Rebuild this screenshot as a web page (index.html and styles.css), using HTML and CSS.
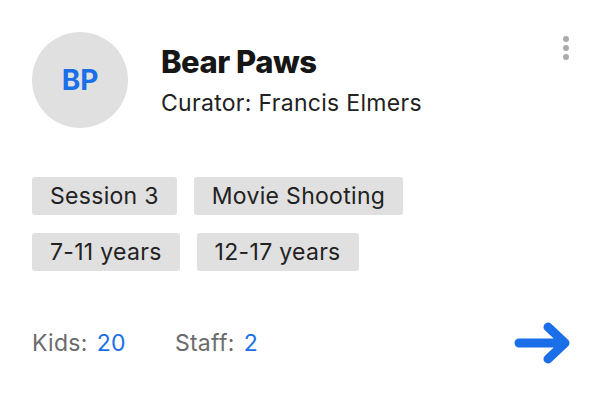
FILE: index.html
```html
<!DOCTYPE html>
<html>
<head>
<meta charset="utf-8">
<link rel="stylesheet" href="styles.css">
</head>
<body>
<div class="card">
  <div class="header">
    <div class="avatar">BP</div>
    <div class="info">
      <div class="title">Bear Paws</div>
      <div class="curator">Curator: Francis Elmers</div>
    </div>
    <div class="kebab"><span></span><span></span><span></span></div>
  </div>
  <div class="tags">
    <div class="row">
      <span class="tag">Session 3</span>
      <span class="tag">Movie Shooting</span>
    </div>
    <div class="row">
      <span class="tag">7-11 years</span>
      <span class="tag">12-17 years</span>
    </div>
  </div>
  <div class="footer">
    <div class="stats">
      <span class="stat"><span class="label">Kids:</span><span class="val">20</span></span>
      <span class="stat"><span class="label">Staff:</span><span class="val">2</span></span>
    </div>
    <svg class="arrow" width="58" height="42" viewBox="0 0 58 42">
      <path d="M6 21 H52 M35 5 L52 21 L35 37" fill="none" stroke="#1a6fe8" stroke-width="9" stroke-linecap="round" stroke-linejoin="round"/>
    </svg>
  </div>
</div>
</body>
</html>
```
FILE: styles.css
```css
html, body {
  margin: 0;
  padding: 0;
  background: #ffffff;
}
body {
  font-family: Inter, "Noto Sans", sans-serif;
  color: #1d1d1f;
}
.card {
  width: 614px;
  height: 416px;
  box-sizing: border-box;
  padding: 32px 42px 0 32px;
}
.header {
  display: flex;
  align-items: center;
}
.avatar {
  width: 96px;
  height: 96px;
  border-radius: 50%;
  background: #e0e0e0;
  color: #1a6fe8;
  font-weight: 700;
  font-size: 28px;
  display: flex;
  align-items: center;
  justify-content: center;
  flex-shrink: 0;
}
.info {
  margin-left: 33px;
  flex: 1;
}
.title {
  font-size: 31px;
  line-height: 36px;
  font-weight: 800;
  letter-spacing: -0.5px;
  color: #161616;
}
.curator {
  margin-top: 9px;
  font-size: 23px;
  line-height: 28px;
  letter-spacing: 0.3px;
  color: #222;
}
.kebab {
  align-self: flex-start;
  margin-top: 4px;
  width: 12px;
  display: flex;
  flex-direction: column;
  align-items: center;
  gap: 3px;
}
.kebab span {
  width: 6px;
  height: 6px;
  border-radius: 50%;
  background: #ababab;
}
.tags {
  margin-top: 49px;
  display: flex;
  flex-direction: column;
  gap: 18px;
}
.row {
  display: flex;
  gap: 17px;
}
.tag {
  background: #e0e0e0;
  border-radius: 3px;
  padding: 5px 18px;
  font-size: 23px;
  line-height: 28px;
  letter-spacing: 0.3px;
  color: #222;
}
.footer {
  margin-top: 51px;
  display: flex;
  align-items: center;
  justify-content: space-between;
}
.stats {
  display: flex;
  gap: 49px;
  font-size: 23px;
  line-height: 28px;
  letter-spacing: 0.3px;
}
.stat {
  display: flex;
  gap: 9px;
}
.label {
  color: #6b6b6b;
}
.val {
  color: #1a6fe8;
}
.arrow {
  display: block;
  margin-right: 1px;
}
```
